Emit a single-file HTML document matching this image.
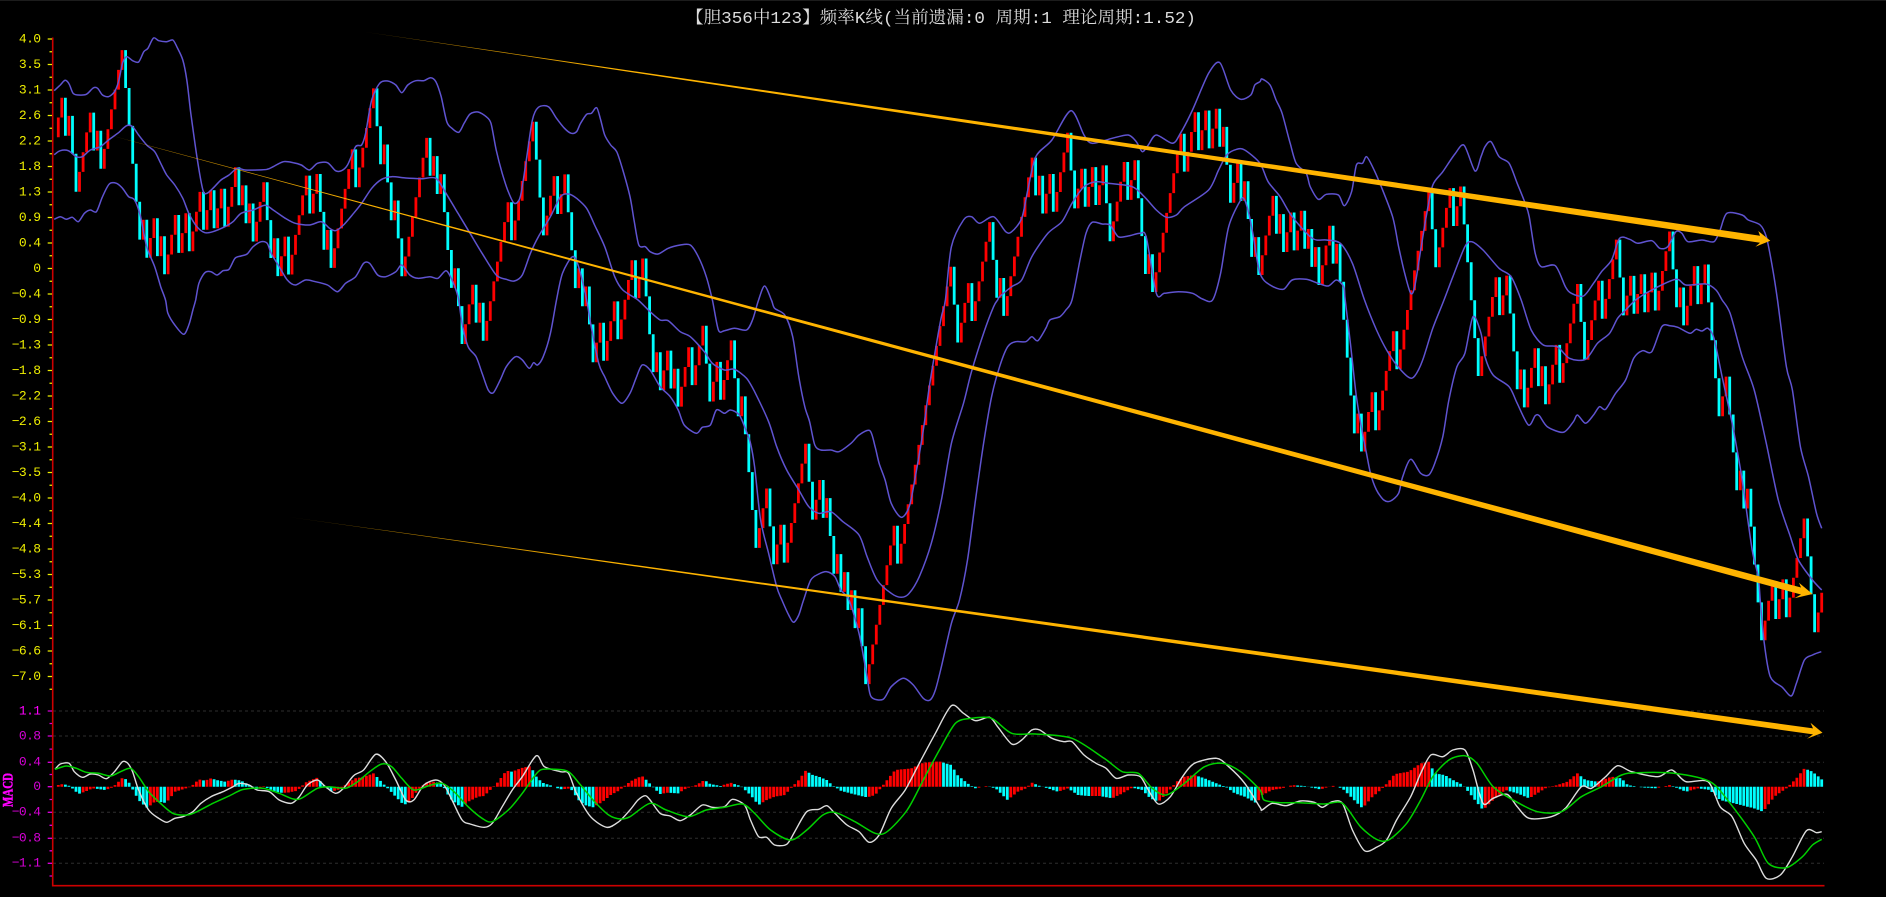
<!DOCTYPE html>
<html lang="zh">
<head>
<meta charset="utf-8">
<title>频率K线</title>
<style>
html,body{margin:0;padding:0;background:#000;width:1886px;height:897px;overflow:hidden}
svg{display:block;position:absolute;left:0;top:0;filter:blur(.35px)}
.y{font:13px "Liberation Mono","DejaVu Sans Mono",monospace;letter-spacing:-.6px;fill:#eeee00;text-anchor:end}
.m{font:13px "Liberation Mono","DejaVu Sans Mono",monospace;letter-spacing:-.6px;fill:#d800d8;text-anchor:end}
</style>
</head>
<body>
<svg id="s" xmlns="http://www.w3.org/2000/svg" width="1886" height="897" viewBox="0 0 1886 897">
<defs>
<linearGradient id="g1" gradientUnits="userSpaceOnUse" x1="363" y1="0" x2="620" y2="0"><stop offset="0" stop-color="#ffb400" stop-opacity=".2"/><stop offset=".3" stop-color="#ffb400" stop-opacity=".7"/><stop offset="1" stop-color="#ffb400"/></linearGradient>
<linearGradient id="g2" gradientUnits="userSpaceOnUse" x1="76" y1="0" x2="380" y2="0"><stop offset="0" stop-color="#ffb400" stop-opacity=".2"/><stop offset=".3" stop-color="#ffb400" stop-opacity=".7"/><stop offset="1" stop-color="#ffb400"/></linearGradient>
<linearGradient id="g3" gradientUnits="userSpaceOnUse" x1="287" y1="0" x2="620" y2="0"><stop offset="0" stop-color="#ffb400" stop-opacity=".2"/><stop offset=".3" stop-color="#ffb400" stop-opacity=".7"/><stop offset="1" stop-color="#ffb400"/></linearGradient>
</defs>
<rect width="1886" height="897" fill="#000"/>
<rect width="1886" height="1" fill="#1c1c1c"/>
<text x="686" y="23" fill="#dcdcdc" font-size="17" textLength="510" lengthAdjust="spacingAndGlyphs" font-family="'Liberation Mono','Noto Serif CJK SC',serif">【胆356中123】频率K线(当前遗漏:0 周期:1 理论周期:1.52)</text>

<g id="grid"></g>
<path d="M52.7 37.5V885.7H1824.5" fill="none" stroke="#cc0000" stroke-width="1.6"/>
<g id="ticks"></g>

<text class="y" x="40.5" y="42.3">4.0</text>
<text class="y" x="40.5" y="67.8">3.5</text>
<text class="y" x="40.5" y="93.3">3.1</text>
<text class="y" x="40.5" y="118.8">2.6</text>
<text class="y" x="40.5" y="144.3">2.2</text>
<text class="y" x="40.5" y="169.8">1.8</text>
<text class="y" x="40.5" y="195.3">1.3</text>
<text class="y" x="40.5" y="220.8">0.9</text>
<text class="y" x="40.5" y="246.3">0.4</text>
<text class="y" x="40.5" y="271.8">0</text>
<text class="y" x="40.5" y="297.3">−0.4</text>
<text class="y" x="40.5" y="322.8">−0.9</text>
<text class="y" x="40.5" y="348.3">−1.3</text>
<text class="y" x="40.5" y="373.8">−1.8</text>
<text class="y" x="40.5" y="399.3">−2.2</text>
<text class="y" x="40.5" y="424.8">−2.6</text>
<text class="y" x="40.5" y="450.3">−3.1</text>
<text class="y" x="40.5" y="475.8">−3.5</text>
<text class="y" x="40.5" y="501.3">−4.0</text>
<text class="y" x="40.5" y="526.8">−4.4</text>
<text class="y" x="40.5" y="552.3">−4.8</text>
<text class="y" x="40.5" y="577.8">−5.3</text>
<text class="y" x="40.5" y="603.3">−5.7</text>
<text class="y" x="40.5" y="628.8">−6.1</text>
<text class="y" x="40.5" y="654.3">−6.6</text>
<text class="y" x="40.5" y="679.8">−7.0</text>

<text class="m" x="40.5" y="714.3" style="fill:#ff00ff">1.1</text>
<text class="m" x="40.5" y="739.3">0.8</text>
<text class="m" x="40.5" y="765.6">0.4</text>
<text class="m" x="40.5" y="790">0</text>
<text class="m" x="40.5" y="815.6">−0.4</text>
<text class="m" x="40.5" y="841.6">−0.8</text>
<text class="m" x="40.5" y="866.6">−1.1</text>
<text transform="translate(12.5,807) rotate(-90)" fill="#ff00ff" stroke="#ff00ff" stroke-width=".5" font-size="15" font-weight="bold" textLength="34" lengthAdjust="spacingAndGlyphs" font-family="'Liberation Serif',serif">MACD</text>

<g id="c"></g>

<polygon fill="url(#g1)" points="363.6,31.7 1760,235.7 1758.3,231 1770.3,240.7 1755.4,246.7 1760,242.7"/>
<polygon fill="url(#g2)" points="76,126 1801,587.5 1799,582.7 1812.5,594 1794.4,598.3 1801,594.5"/>
<polygon fill="url(#g3)" points="287,516.7 1813,728.4 1810.5,722.7 1822.5,732.7 1807,738.7 1813,734.4"/>
</svg>
<script>
(function(){
var P={A:[0,0],B:[630,0],C:[1256,0],D:[0,300],E:[630,300],F:[1256,300],G:[0,600],H:[630,600],I:[1256,600]};
var SX=630/1568,SY=1/3;
function pl(segs){var o=[];for(var i=0;i<segs.length;i+=2){var p=P[segs[i]],a=segs[i+1];for(var j=0;j<a.length;j+=2){o.push([p[0]+a[j]*SX,p[1]+a[j+1]*SY]);}}return o;}
function f(n){return n.toFixed(1);}
function smooth(a){var n=a.length,d='M'+f(a[0][0])+' '+f(a[0][1]),k=1/7;
 for(var i=0;i<n-1;i++){var p0=a[Math.max(i-1,0)],p1=a[i],p2=a[i+1],p3=a[Math.min(i+2,n-1)];
  d+='C'+f(p1[0]+(p2[0]-p0[0])*k)+' '+f(p1[1]+(p2[1]-p0[1])*k)+' '+f(p2[0]-(p3[0]-p1[0])*k)+' '+f(p2[1]-(p3[1]-p1[1])*k)+' '+f(p2[0])+' '+f(p2[1]);}
 return d;}
function poly(segs,col,w){return '<path fill="none" stroke="'+col+'" stroke-width="'+w+'" stroke-linejoin="round" d="'+smooth(pl(segs))+'"/>';}

/* grid & ticks */
var g='',t='',i,y;
[711,736,762.3,812.3,838.3,863.3].forEach(function(v){g+='<line x1="53" x2="1824" y1="'+v+'" y2="'+v+'" stroke="#2e2e2e" stroke-width="1" stroke-dasharray="3 3"/>';});
document.getElementById('grid').innerHTML=g;
var yt='',ym='';
for(i=0;i<26;i++){y=39+i*25.5;yt+='M47.7 '+y+'H52M49.5 '+(y+12.75)+'H52';}
var mt=[711,736,762.3,786.7,812.3,838.3,863.3];
mt.forEach(function(v,k){ym+='M47.7 '+v+'H52';ym+='M49.5 '+(k<6?(v+mt[k+1])/2:876)+'H52';});
document.getElementById('ticks').innerHTML='<path d="'+yt+'" stroke="#eeee00" stroke-width="1.3" fill="none"/><path d="'+ym+'" stroke="#d800d8" stroke-width="1.3" fill="none"/>';

/* candles */
var X0=58.3,DX=3.541,U=19.67,D=38;
var segs=[
[137.3,280,"UU D U DD UUUU D U D UUUUUU DDDDD U D UU D U D UUU D UU D UUU D UU D UU D UUU D U D U D UUU DD U D UU D UUUUU D UU DD U D UUUUUU D UUUUU DD U DD U DD UUUUUUU D U D U DDD U DD UUU D U D UUUUUUU D UUUUUU DDD UUU D UU DDD U D U DD UU D UUU D UUU"],
[280,275,"U D UU DDD U D UU D U D UUU D UUU DD UU D UUU DD U DDDD UUU DD UU D UUUUUU DD UU D U DD U D U D U D U DD UUUUUUUU D UUUUUUUUUUUUUUU DD UUU D UUUUU DD U D UUUUUUUU D U D UU D UUUU DD UU D UU D UU DD UUUU D UU DDD U D UUUUUUUU D UUU D UU D UU D U DD UU D U DD U D"],
[275,592.7,"UUUU D U D UU D UU D U D U D UUU D U DDDDD U D UUU D UUUUU D UUUUUUUUU DD UUUU D UU DDDDD UUUUU D UU DDD U D UUU D U D UUU D UUUUU DD UUUU D UUUU DD UU D UU D UU D UUUU DD U D UUU D UU DDDD UU DDD U D U DDDD UUU D UU D UUUUU DDD UU"]
];
var red='',cy='',idx=0;
segs.forEach(function(s){
  var str=s[2].replace(/\s+/g,''),n=str.length,net=0,k;
  for(k=0;k<n;k++)net+=str[k]=='U'?-U:D;
  var corr=((s[1]-s[0])-net)/n,cur=s[0];
  for(k=0;k<n;k++){
    var up=str[k]=='U',nx=cur+(up?-U:D)+corr,x=(X0+idx*DX).toFixed(1);
    if(up)red+='M'+x+' '+cur.toFixed(1)+'V'+nx.toFixed(1);
    else cy+='M'+x+' '+cur.toFixed(1)+'V'+nx.toFixed(1);
    cur=nx;idx++;
  }
});
var total=idx;
var h='<path d="'+red+'" stroke="#ff0000" stroke-width="2.8" fill="none"/><path d="'+cy+'" stroke="#00ffff" stroke-width="2.8" fill="none"/>';

/* bollinger */
var PUR='#5f53d0';
var upper=['A',[135,272,150,255,162,241,172,252,182,280,195,285,215,283,232,264,243,265,255,285,270,290,285,275,295,245,305,190,315,170,330,182,345,186,358,155,368,145,382,114,395,122,415,125,430,120,440,140,455,180,465,240,475,340,490,470,505,570,515,580,530,565,550,540,570,525,590,505,610,510,640,510,665,508,680,500,705,485,730,488,750,495,770,510,790,490,815,488,835,512,850,512,865,495,885,440,900,435,910,400,925,300,945,250,965,243,985,255,1000,278,1015,255,1035,242,1055,242,1072,233,1085,245,1098,290,1112,365,1125,385,1142,397,1155,370,1170,342,1190,336,1210,350,1222,370,1235,450,1250,520,1265,575,1280,610,1295,590,1310,480,1325,360,1340,322,1365,320,1385,355,1405,385,1422,400,1435,395,1445,370,1460,343,1472,340,1485,323,1495,360,1505,405,1520,435,1535,455,1550,510,1568,590],
'B',[10,660,22,735,38,740,50,755,70,762,95,745,125,735,150,735,170,770,190,830,205,900],
'E',[220,90,235,92,260,85,290,90,305,60,320,0],
'B',[335,858,352,900],
'E',[360,25,385,45,405,110,420,230,435,320,447,365,460,435,475,450,500,450,520,455,550,430,570,405,597,392,610,440,620,490,635,540,650,610,675,652,695,620,710,530,730,390,745,260,760,150,775,50,785,0],
'B',[800,740,830,660,850,650,870,670,905,650,935,695,950,695,975,655,990,570,1010,470,1050,420,1097,332,1130,405,1150,430,1200,415,1240,405,1260,425,1275,455,1290,435,1310,405,1350,430,1370,400,1400,330,1440,220,1468,188,1495,270,1520,298,1545,285,1555,255,1568,245],
'C',[15,237,35,255,50,300,65,340,85,430,100,490,125,520,135,560,155,598,175,583,205,585,220,617,238,575,250,495,265,490,275,470,290,500,310,555,340,650,355,740,370,820,385,880,395,860,410,750,425,640,440,555,465,515,495,462,518,436,545,513,560,470,570,440,585,425,605,470,630,490,650,550,670,610,680,650,695,760,710,800,745,797,770,860,785,880,815,888,840,850,860,815,885,780,905,715,930,718,950,730,985,722,1005,745,1025,740,1045,695,1060,700,1075,725,1110,720,1140,725,1155,690,1172,640,1210,645,1225,660,1255,675,1270,710,1285,800,1298,900],
'F',[1320,200,1335,270,1355,440,1375,530,1395,640,1408,685]];
var mid=['A',[135,464,150,452,170,452,190,470,205,470,225,450,250,440,270,420,295,398,315,377,330,380,345,405,365,435,385,455,400,490,415,525,435,555,455,595,470,640,490,680,510,698,530,695,560,680,580,665,600,640,630,630,660,616,680,630,710,655,735,670,770,675,800,665,820,685,835,692,855,675,880,640,900,610,925,565,950,538,975,530,1010,534,1050,536,1085,535,1110,580,1140,640,1170,700,1200,760,1235,825,1260,838,1280,843,1300,825,1320,760,1340,710,1370,650,1395,590,1415,582,1435,595,1460,625,1480,675,1505,740,1530,830,1550,870],
'E',[20,0,50,35,75,60,95,62,125,95,150,110,185,155,205,190,235,210,260,208,290,235,310,275,345,365,365,440,390,510,420,570,445,620,470,640,500,635,530,665,570,705,590,770,615,840,650,880,675,892,695,880,720,830,750,730,775,600,800,430,830,310,850,215,880,100,905,20,915,0],
'B',[920,890,950,860,975,840,1000,770,1040,700,1075,665,1100,610,1130,560,1160,545,1190,550,1250,560,1280,590,1310,630,1335,652,1360,645,1380,620,1440,570,1465,510,1485,465,1510,448,1530,450,1568,490],
'C',[30,545,60,590,90,650,140,715,175,720,210,730,240,790,270,900],
'F',[300,90,325,150,350,195,380,232,395,228,415,180,440,85,468,0],
'C',[490,830,520,740,537,725,565,750,605,805,635,830,660,900],
'F',[685,90,715,135,750,140,780,175,820,178,850,130,880,100,900,55,920,30,945,0],
'C',[985,870,1045,838,1070,855,1120,852,1145,870,1160,900],
'F',[1180,40,1210,170,1240,270,1270,430,1300,600,1330,710,1350,780,1385,840,1408,870]];
var lower=['A',[135,658,150,650,165,658,180,652,195,665,210,640,225,630,240,635,255,590,272,552,290,550,305,565,320,590,335,600,350,650,365,740,385,800,400,860,412,900],
'D',[418,40,435,75,457,103,470,75,480,30,487,0],
'A',[495,850,510,818,525,815,540,825,555,812,570,808,585,775,600,768,615,762,630,740,650,725,665,730,675,760,695,800,715,840,735,855,760,840,785,845,815,855,840,875,860,850,885,830,905,790,920,790,940,825,960,830,985,815,1000,795,1020,825,1040,835,1070,830,1090,835,1110,812,1125,840,1140,890],
'D',[1150,70,1165,140,1185,170,1200,220,1215,270,1228,278,1245,240,1260,200,1283,170,1300,180,1317,205,1328,188,1338,195,1352,170,1370,100,1385,0],
'A',[1400,820,1425,770,1440,800,1460,900],
'D',[1470,70,1490,190,1505,230,1525,280,1548,310,1568,280],
'E',[15,235,30,195,50,210,75,260,100,290,120,330,135,375,165,400,180,382,200,375,215,330,235,340,250,330,272,345,290,395,300,430,310,500,325,660,345,760,365,860,378,900],
'H',[395,45,407,67,420,45,432,0],
'E',[450,840,470,822,490,815,510,830,525,870,545,900],
'H',[570,100,590,230,600,290,630,298,650,260,680,235,705,255,730,295,747,300,760,270,775,200,800,70,820,0],
'E',[840,780,860,600,880,430,900,290,920,200,940,140,960,125,985,125,1000,110,1015,122,1035,85,1045,60,1070,50,1085,30,1100,0],
'B',[1120,780,1135,700,1150,667,1175,672,1195,675,1215,710,1240,708,1270,700,1285,712,1310,880,1330,880,1365,875,1400,880,1425,897,1450,900,1470,820,1490,680,1520,600,1530,600,1540,640,1550,700,1568,820],
'C',[35,855,68,868,90,840,125,838,155,850,180,858,200,840,218,860,222,900],
'F',[235,130,250,290,265,400,275,460,285,520,300,570,318,600,335,603,355,580,365,530,385,478,410,520,430,525,445,490,465,410,480,300,500,200,520,160,540,50,560,100,570,170,590,225,630,260,650,310,678,375,695,347,705,347,725,380,765,397,790,365,800,345,820,370,840,345,855,320,870,328,895,280,920,240,940,175,962,152,985,155,1010,80,1030,77,1050,82,1080,100,1095,88,1110,93,1125,85,1140,115,1160,230,1180,340,1190,400,1210,540,1235,750,1250,830,1255,900],
'I',[1265,130,1280,230,1310,262,1332,288,1345,250,1365,180,1385,165,1407,155]];
h+=poly(upper,PUR,1.5)+poly(mid,PUR,1.5)+poly(lower,PUR,1.5);

/* histogram */
var hd=[[0,[145,5,157,8,170,4,180,-5,195,-22,212,-15,230,-5,245,-7,262,-10,280,-2,295,15,305,27,318,20,330,-8,345,-40,358,-55,368,-65,380,-48,395,-45,410,-48,420,-40,435,-15,455,-8,475,0,495,22,510,18,525,25,540,20,560,15,580,22,600,18,620,5,640,-8,655,2,675,-10,695,-18,715,-18,740,-12,760,12,775,20,790,27,805,5,825,-15,845,-8,870,15,885,25,905,30,930,40,945,20,965,-5,985,-30,1005,-55,1020,-45,1040,-10,1060,12,1080,15,1100,8,1120,-35,1140,-55,1150,-60,1165,-45,1190,-30,1205,-28,1220,-10,1240,15,1260,48,1275,45,1295,55,1320,62,1335,30,1350,12,1375,2,1395,-8,1420,-5,1440,-40,1455,-55,1475,-62,1500,-45,1520,-25,1540,-12,1568,15]],
[630,[15,25,30,32,45,15,60,-5,75,-22,95,-18,120,-20,140,-5,165,5,185,20,200,8,225,2,250,12,275,2,300,-25,320,-55,340,-40,360,-30,385,-25,400,-5,420,20,437,48,455,35,470,30,490,20,505,3,525,-12,555,-22,590,-32,610,-25,630,5,660,50,700,55,730,72,770,76,800,65,815,35,840,10,860,-5,885,2,910,-5,940,-40,965,-15,985,-5,1000,12,1020,2,1040,-5,1065,-15,1090,-5,1115,-25,1140,-28,1170,-28,1200,-35,1225,-20,1250,-3,1275,-10,1295,-35,1315,-45,1340,-15,1360,15,1380,30,1405,35,1430,25,1460,10,1485,-2,1505,-20,1530,-30,1560,-50]],
[1256,[15,-25,40,-10,65,-5,90,5,120,2,160,-8,190,3,215,-5,240,-35,265,-65,290,-30,310,-10,330,15,345,38,380,45,410,70,430,75,445,40,470,35,490,20,515,5,545,-40,565,-70,590,-40,620,-10,650,-20,680,-35,720,-5,750,5,775,15,800,40,820,20,850,15,885,30,910,25,925,5,960,-2,995,-5,1030,5,1070,-15,1100,-5,1130,-10,1155,-40,1190,-50,1240,-65,1262,-75,1290,-30,1320,-5,1345,25,1365,55,1385,45,1410,20]]];
var hp=[];hd.forEach(function(s){for(var j=0;j<s[1].length;j+=2)hp.push([s[0]+s[1][j]*SX,s[1][j+1]*SY]);});
function hv(x){if(x<=hp[0][0])return hp[0][1];for(var j=1;j<hp.length;j++){if(x<=hp[j][0]){var a=hp[j-1],b=hp[j];return a[1]+(b[1]-a[1])*(x-a[0])/(b[0]-a[0]);}}return hp[hp.length-1][1];}
var hr='',hc='',prev=null;
for(i=0;i<total;i++){
  var x=X0+i*DX,v=hv(x),by=786.7;
  var sg='M'+x.toFixed(1)+' '+by+'V'+(by-v).toFixed(1);
  if(prev===null||v>=prev)hr+=sg;else hc+=sg;
  prev=v;
}
h+='<path d="'+hr+'" stroke="#ff0000" stroke-width="2.8" fill="none"/><path d="'+hc+'" stroke="#00ffff" stroke-width="2.8" fill="none"/>';

/* MACD lines */
var white=['G',[137,508,150,492,172,490,185,515,205,532,225,522,245,525,265,536,285,515,305,485,318,490,330,515,345,570,370,630,395,655,415,667,435,655,455,650,480,635,500,610,525,590,555,575,580,560,595,550,620,555,640,570,670,575,695,600,725,610,745,590,765,555,790,540,810,560,835,580,855,565,880,527,905,510,935,463,960,485,985,540,1010,600,1030,600,1055,555,1085,540,1105,555,1125,600,1150,660,1170,672,1205,682,1225,670,1250,620,1275,570,1300,530,1335,467,1355,500,1395,515,1415,520,1435,580,1470,650,1510,682,1540,665,1568,630],
'H',[20,600,38,587,50,600,75,640,100,648,125,662,150,645,180,615,205,622,235,620,255,598,285,615,300,660,320,710,340,712,360,735,390,733,410,695,440,635,470,628,490,617,510,640,540,675,570,695,595,727,620,705,650,625,685,570,720,490,760,400,800,317,830,340,860,362,895,352,915,380,950,432,975,420,1000,390,1020,390,1050,415,1080,425,1100,425,1130,465,1160,490,1185,505,1210,535,1240,525,1270,530,1290,570,1315,612,1345,590,1375,530,1405,490,1460,475,1490,500,1530,550,1568,622],
'I',[15,630,40,610,75,617,110,603,145,607,165,622,190,605,215,610,240,690,270,752,300,742,325,720,350,660,385,590,410,520,435,465,465,470,490,450,520,450,540,510,565,610,590,595,625,583,650,620,680,655,735,650,770,625,810,560,835,565,870,530,900,497,935,515,1000,530,1035,510,1070,545,1125,545,1155,620,1185,650,1215,730,1245,780,1270,835,1305,825,1335,770,1370,692,1395,698,1408,695]];
var green=['G',[137,508,165,498,190,505,215,517,245,520,275,528,300,515,325,505,345,530,370,575,395,605,430,640,465,645,490,635,530,610,570,588,600,570,625,565,655,565,695,580,730,597,750,595,790,565,820,560,860,565,890,545,920,515,950,492,975,500,1000,535,1030,570,1065,558,1100,550,1130,575,1165,620,1200,655,1225,665,1265,630,1300,580,1320,545,1345,510,1380,508,1415,515,1445,555,1480,605,1515,645,1545,657,1568,650],
'H',[50,610,90,630,145,650,190,630,235,622,280,612,310,640,350,690,400,720,440,690,480,645,510,637,560,665,610,700,640,695,690,630,730,540,770,450,810,370,850,355,900,355,950,400,1010,402,1100,415,1180,475,1225,515,1265,520,1300,565,1335,585,1380,550,1430,500,1475,490,1520,515,1568,570],
'I',[20,600,60,608,110,608,170,612,215,610,260,680,300,718,330,720,375,670,410,600,440,530,480,480,520,467,550,490,590,560,640,600,700,635,760,635,810,590,860,560,910,525,950,518,1040,520,1130,545,1180,610,1240,710,1275,790,1320,803,1360,770,1385,735,1408,718]];
h+=poly(white,'#dddddd',1.4)+poly(green,'#00d000',1.5);
document.getElementById('c').innerHTML=h;
})();
</script>
</body>
</html>
